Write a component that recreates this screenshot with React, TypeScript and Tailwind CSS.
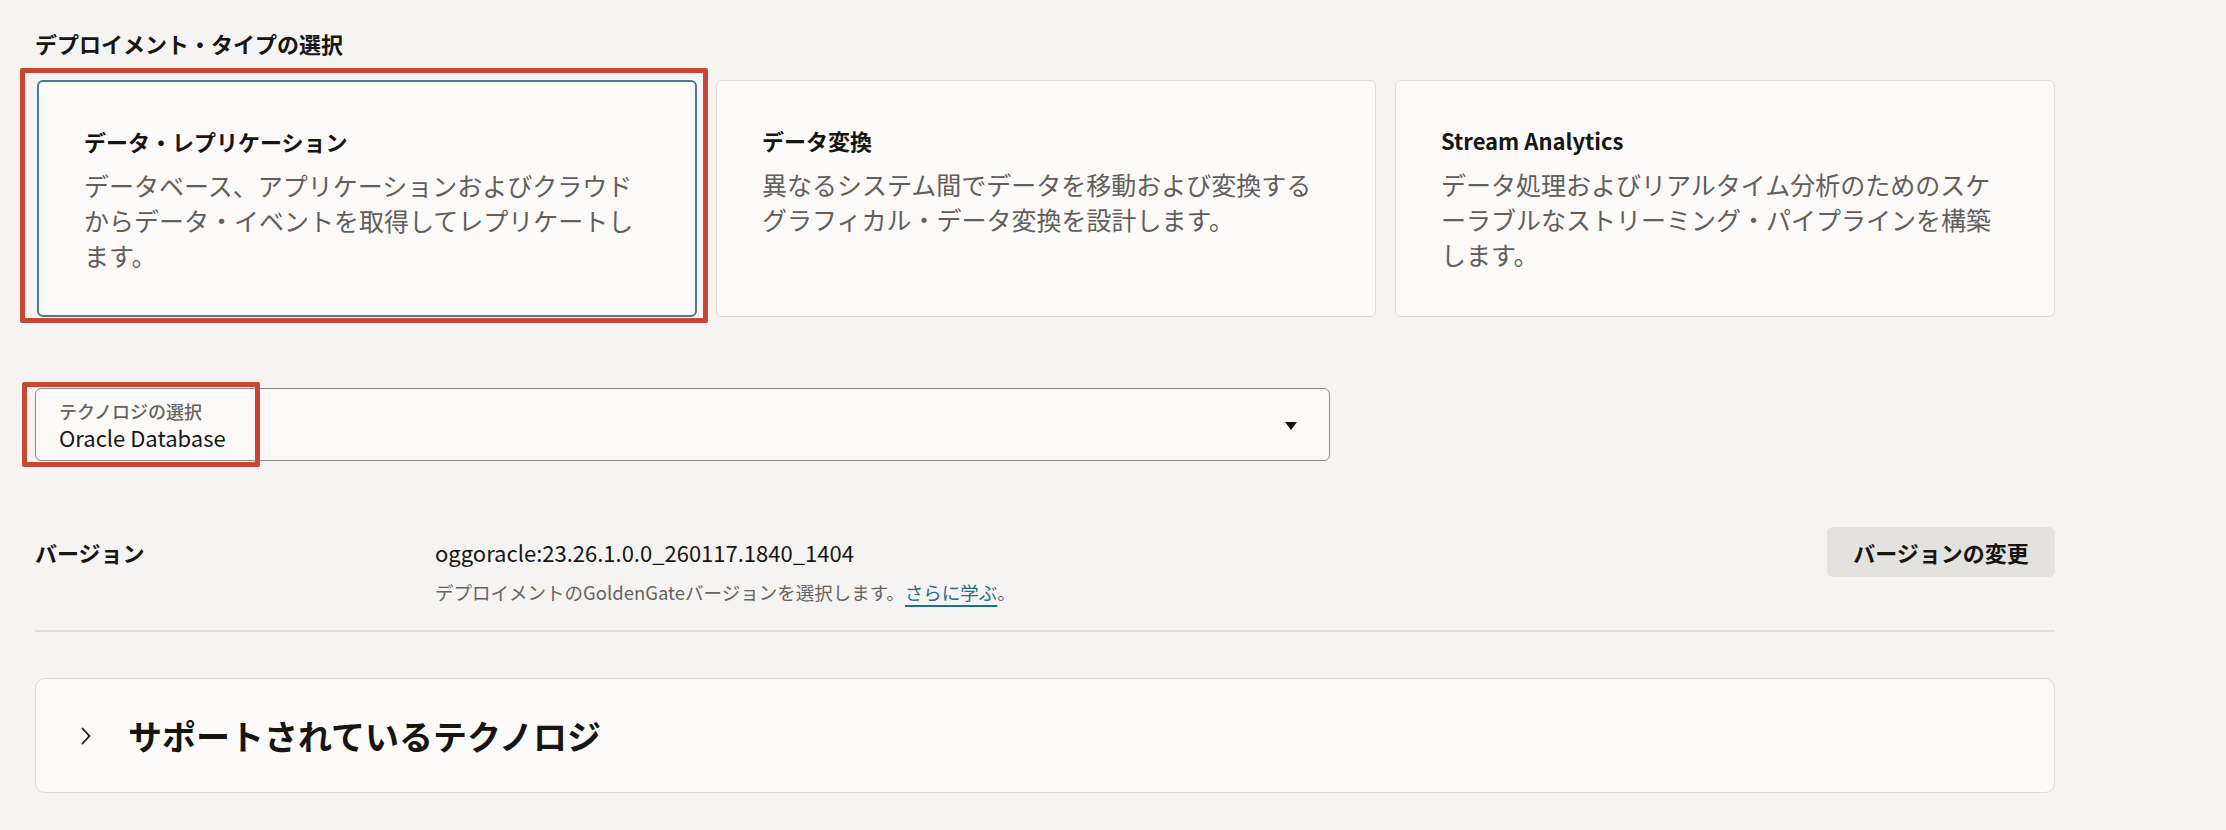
import { useState } from 'react';

const deploymentTypes = [
  {
    id: 'replication',
    title: 'データ・レプリケーション',
    description: 'データベース、アプリケーションおよびクラウドからデータ・イベントを取得してレプリケートします。',
  },
  {
    id: 'transform',
    title: 'データ変換',
    description: '異なるシステム間でデータを移動および変換するグラフィカル・データ変換を設計します。',
  },
  {
    id: 'stream',
    title: 'Stream Analytics',
    description: 'データ処理およびリアルタイム分析のためのスケーラブルなストリーミング・パイプラインを構築します。',
  },
];

export default function App() {
  const [selected, setSelected] = useState('replication');
  const [open, setOpen] = useState(false);

  return (
    <div
      className="min-h-[830px] w-full bg-[#f5f4f2] pl-[35px] pt-[28px] text-[#161513]"
      style={{ fontFamily: '"Noto Sans CJK JP", "Noto Sans", sans-serif' }}
    >
      <div className="w-[2020px]">
        <h2 className="text-[22px] font-bold leading-[30px]">デプロイメント・タイプの選択</h2>

        {/* Deployment type cards */}
        <div className="mt-[22px] grid grid-cols-3 gap-[19px] pl-[2px]">
          {deploymentTypes.map((t) => {
            const isSelected = selected === t.id;
            return (
              <div key={t.id} className="relative">
                <button
                  onClick={() => setSelected(t.id)}
                  className={`flex h-[237px] w-full flex-col items-start justify-start rounded-[6px] bg-[#fbfaf9] px-[45px] pt-[44px] text-left ${
                    isSelected ? 'border-2 border-[#3f7c9e]' : 'border border-[#dfdcd8]'
                  }`}
                >
                  <div className="text-[22px] font-bold leading-[30px] text-[#161513]">{t.title}</div>
                  <p className="mt-[12px] text-[25px] leading-[35px] text-[#615e5b]">{t.description}</p>
                </button>
                {isSelected && (
                  <div className="pointer-events-none absolute -top-[12px] -bottom-[6px] -left-[17px] -right-[11px] rounded-[2px] border-[5px] border-[#c74634]" />
                )}
              </div>
            );
          })}
        </div>

        {/* Technology select */}
        <div className="relative mt-[71px] w-[1295px]">
          <button className="flex h-[73px] w-full items-center justify-between rounded-[6px] border border-[#8e8b87] bg-[#fbfaf9] pl-[23px] pr-[32px] text-left">
            <div className="flex flex-col">
              <span className="text-[18px] font-medium leading-[24px] text-[#66635f]">テクノロジの選択</span>
              <span className="text-[22px] leading-[28px] text-[#161513]">Oracle Database</span>
            </div>
            <svg width="12" height="8" viewBox="0 0 12 8" className="mt-[2px]">
              <polygon points="0,0 12,0 6,8" fill="#161513" />
            </svg>
          </button>
          <div className="pointer-events-none absolute -top-[6px] -left-[13px] h-[85px] w-[238px] rounded-[2px] border-[5px] border-[#c74634]" />
        </div>

        {/* Version row */}
        <div className="mt-[66px] flex items-start border-b-2 border-[#e2e0dc] pb-[25px]">
          <div className="w-[400px] pt-[10px] text-[22px] font-bold leading-[30px]">バージョン</div>
          <div className="flex-1 pt-[10px]">
            <div className="text-[22px] leading-[30px] text-[#161513]">oggoracle:23.26.1.0.0_260117.1840_1404</div>
            <div className="mt-[12px] text-[18.5px] leading-[26px] text-[#66635f]">
              デプロイメントのGoldenGateバージョンを選択します。
              <a className="text-[#1f6e93] underline decoration-[#1f6e93] decoration-[1.5px] underline-offset-[5px]">
                さらに学ぶ
              </a>
              。
            </div>
          </div>
          <button className="h-[50px] w-[228px] rounded-[6px] bg-[#e4e2df] text-[22px] font-bold leading-[30px] text-[#161513]">
            バージョンの変更
          </button>
        </div>

        {/* Supported technologies accordion */}
        <button
          onClick={() => setOpen(!open)}
          className="mt-[46px] flex h-[115px] w-full items-center rounded-[10px] border border-[#dedbd7] bg-[#fbfaf9] pl-[44px] text-left"
        >
          <svg width="12" height="20" viewBox="0 0 12 20" fill="none" className={open ? 'rotate-90' : ''}>
            <path d="M2.5 2.5 L9.5 10 L2.5 17.5" stroke="#161513" strokeWidth="1.8" strokeLinecap="round" strokeLinejoin="round" />
          </svg>
          <span className="ml-[36px] text-[34px] font-bold leading-[44px]">サポートされているテクノロジ</span>
        </button>
      </div>
    </div>
  );
}
